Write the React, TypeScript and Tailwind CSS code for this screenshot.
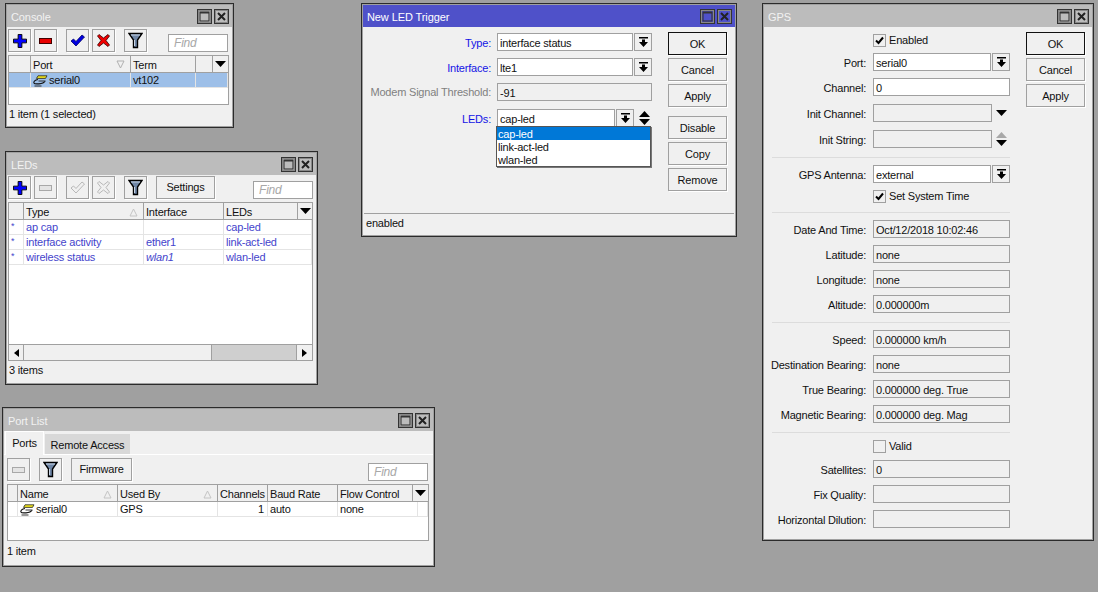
import type { ReactNode } from "react";

function RestoreIcon() {
  return (
    <svg width="13" height="13" viewBox="0 0 13 13">
      <rect x="2" y="2" width="9" height="9" fill="none" stroke="#333" strokeWidth="1.100" />
      <rect x="2" y="2" width="9" height="1.500" fill="#333" />
    </svg>
  );
}

function CloseIcon() {
  return (
    <svg width="13" height="13" viewBox="0 0 13 13">
      <path d="M3 3l7 7M10 3l-7 7" stroke="#222" strokeWidth="2" />
    </svg>
  );
}

function PlusIcon() {
  return (
    <svg width="14" height="14" viewBox="0 0 15 15">
      <path d="M5.500 .5h4v5h5v4h-5v5h-4v-5h-5v-4h5z" fill="#0000ff" stroke="#000" />
    </svg>
  );
}

function MinusIcon({ off }: { off?: boolean }) {
  return (
    <svg width="15" height="8" viewBox="0 0 15 8">
      <rect x="1.500" y="1.500" width="12" height="5" fill={off ? "#e4e4e4" : "#e80000"} stroke={off ? "#a8a8a8" : "#400000"} />
    </svg>
  );
}

function CheckIcon({ off }: { off?: boolean }) {
  return (
    <svg width="15" height="13" viewBox="0 0 15 13">
      <path
        d="M1 7l2.500-2 2.500 2.500L12 1l2.500 2L6 12z"
        fill={off ? "#f0f0f0" : "#0000e0"}
        stroke={off ? "#a8a8a8" : "#00006a"}
        strokeWidth=".8"
      />
    </svg>
  );
}

function CrossIcon({ off }: { off?: boolean }) {
  return (
    <svg width="15" height="15" viewBox="0 0 15 15">
      <path
        d="M3 1.500l4.500 3.500L12 1.500l1.500 1.500-3.500 4.500 3.500 4.500-1.500 1.500-4.500-3.500L3 13.500 1.500 12 5 7.500 1.500 3z"
        fill={off ? "#f0f0f0" : "#f00000"}
        stroke={off ? "#a8a8a8" : "#300000"}
        strokeWidth=".8"
      />
    </svg>
  );
}

function FilterIcon() {
  return (
    <svg width="15" height="17" viewBox="0 0 15 17">
      <path d="M1 1.500h13L9.500 8v7.500h-4V8z" fill="#6f86a6" stroke="#000" strokeWidth="1.400" />
      <path d="M6.500 8v6" stroke="#c8d4e4" />
      <path d="M3 3h9" stroke="#c8d4e4" />
    </svg>
  );
}

function SerialIcon() {
  return (
    <svg width="15" height="12" viewBox="0 0 15 12" className="shrink-0">
      <path d="M5 .8h9l-1.500 2.600H3.500z" fill="#f5e81e" stroke="#222" strokeWidth=".8" />
      <path d="M5 4.500C2 5 .5 6.500 1 8c.4 1 3 1 5 .8 2.500-.2 5-.8 6-2.600" fill="none" stroke="#111" strokeWidth="1.200" />
      <path d="M5.500 6h7M1.500 11h7" fill="none" stroke="#333" />
    </svg>
  );
}

function SortMark() {
  return (
    <svg width="9" height="9" viewBox="0 0 9 9" className="absolute right-[5px] top-[5px]">
      <path d="M1 8h7M1 8l3.500-7L8 8" fill="none" stroke="#c4c4c4" />
    </svg>
  );
}

function SortMarkDown() {
  return (
    <svg width="9" height="9" viewBox="0 0 9 9" className="absolute right-[5px] top-[4px]">
      <path d="M1 1h7L4.500 8z" fill="none" stroke="#b0b0b0" />
    </svg>
  );
}

function DownTriangle() {
  return (
    <svg width="11" height="6" viewBox="0 0 11 6">
      <path d="M0 0h11L5.500 6z" fill="#000" />
    </svg>
  );
}

function DropArrow() {
  return (
    <svg width="9" height="10" viewBox="0 0 9 10">
      <rect x="0" y="0" width="9" height="1.500" fill="#000" />
      <path d="M3 2.500h3V5h3L4.500 10 0 5h3z" fill="#000" />
    </svg>
  );
}

function UpDown({ upOff }: { upOff?: boolean }) {
  return (
    <svg width="11" height="14" viewBox="0 0 11 14">
      <path d="M5.500 0L11 6H0z" fill={upOff ? "#a8a8a8" : "#000"} />
      <path d="M0 8h11l-5.500 6z" fill="#000" />
    </svg>
  );
}

function Win({
  pos,
  title,
  active,
  children,
}: {
  pos: string;
  title: string;
  active?: boolean;
  children: ReactNode;
}) {
  return (
    <div className={`absolute flex flex-col border border-[#2b2b2b] bg-[#f0f0f0] shadow-[inset_0_0_0_1px_#a0a0a0] p-px ${pos}`}>
      <div className={`flex h-[22px] shrink-0 items-center justify-between pl-[4px] pr-[3px] tracking-[-0.1px] ${active ? "bg-[#4f51c9] text-white" : "bg-[#bcbcbc] text-[#f2f2f2]"}`}>
        <span className="pt-[2px]">{title}</span>
        <div className="flex gap-[2px]">
          <div className="flex h-[15px] w-[15px] items-center justify-center border border-[#333] shadow-[inset_0_0_0_1px_#888]">
            <RestoreIcon />
          </div>
          <div className="flex h-[15px] w-[15px] items-center justify-center border border-[#333] shadow-[inset_0_0_0_1px_#888]">
            <CloseIcon />
          </div>
        </div>
      </div>
      {children}
    </div>
  );
}

function Tool({ children, extra }: { children: ReactNode; extra?: string }) {
  return (
    <div className={`flex h-[23px] w-[23px] shrink-0 items-center justify-center border border-[#a0a0a0] bg-[#f0f0f0] shadow-[1px_1px_0_#fff] ${extra ?? ""}`}>
      {children}
    </div>
  );
}

function TextTool({ label, width }: { label: string; width: string }) {
  return (
    <div className={`flex h-[23px] shrink-0 items-center justify-center border border-[#a0a0a0] bg-[#f0f0f0] pb-[1px] shadow-[1px_1px_0_#fff] ${width}`}>
      {label}
    </div>
  );
}

function Find({ extra }: { extra: string }) {
  return (
    <div className={`flex h-[18px] w-[60px] items-center border border-[#a0a0a0] bg-white pl-[5px] text-[12px] italic text-[#a8a8a8] ${extra}`}>
      Find
    </div>
  );
}

function HeadCell({ w, children }: { w: string; children?: ReactNode }) {
  return (
    <div className={`relative flex h-[17px] shrink-0 items-center border-r border-b border-[#a0a0a0] pl-[2px] pt-[2px] whitespace-nowrap ${w}`}>
      {children}
    </div>
  );
}

function Cell({ w, extra, children }: { w: string; extra?: string; children?: ReactNode }) {
  return (
    <div className={`flex h-[15px] shrink-0 items-center border-r border-b border-[#e4e4e4] pl-[2px] pt-[1px] whitespace-nowrap ${w} ${extra ?? ""}`}>
      {children}
    </div>
  );
}

function DropBtn() {
  return (
    <div className="flex h-[18px] w-[18px] shrink-0 items-center justify-center border border-[#a0a0a0] bg-[#f0f0f0]">
      <DropArrow />
    </div>
  );
}

function Input({ w, off, children }: { w: string; off?: boolean; children?: ReactNode }) {
  return (
    <div className={`flex h-[18px] shrink-0 items-center border border-[#a0a0a0] pl-[2px] pt-[2px] whitespace-nowrap ${off ? "bg-[#f0f0f0]" : "bg-white"} ${w}`}>
      {children}
    </div>
  );
}

function DlgBtn({ label, extra, main }: { label: string; extra?: string; main?: boolean }) {
  return (
    <div className={`flex h-[23px] w-[59px] items-center justify-center border pt-[2px] ${main ? "border-[#111]" : "border-[#a0a0a0]"} shadow-[1px_1px_0_#fff] ${extra ?? ""}`}>
      {label}
    </div>
  );
}

function Row({ label, m, children }: { label: string; m: string; children: ReactNode }) {
  return (
    <div className={`flex h-[18px] items-center ${m}`}>
      <div className="w-[102px] shrink-0 pt-[2px] text-right whitespace-nowrap">{label}</div>
      <div className="ml-[7px] flex items-center">{children}</div>
    </div>
  );
}

function Check({ label, on, m }: { label: string; on?: boolean; m: string }) {
  return (
    <div className={`ml-[109px] flex h-[18px] items-center gap-[3px] ${m}`}>
      <div className="flex h-[13px] w-[13px] items-center justify-center border border-[#a0a0a0] bg-[#f0f0f0]">
        {on && (
          <svg width="9" height="9" viewBox="0 0 9 9">
            <path d="M1 4.500l2.500 2.500L8 1.500" fill="none" stroke="#000" strokeWidth="2" />
          </svg>
        )}
      </div>
      <span className="pt-[1px]">{label}</span>
    </div>
  );
}

function Sep({ m }: { m: string }) {
  return <div className={`ml-[8px] h-px w-[238px] bg-[#dcdcdc] ${m}`} />;
}

function Console() {
  return (
    <Win pos="left-[5px] top-[3px] w-[229px] h-[125px]" title="Console">
      <div className="flex h-[28px] shrink-0 pl-[1px] pt-[2px]">
        <Tool><PlusIcon /></Tool>
        <Tool extra="ml-[3px]"><MinusIcon /></Tool>
        <Tool extra="ml-[9px]"><CheckIcon /></Tool>
        <Tool extra="ml-[3px]"><CrossIcon /></Tool>
        <Tool extra="ml-[9px]"><FilterIcon /></Tool>
        <Find extra="ml-[21px] mt-[5px]" />
      </div>
      <div className="mx-px h-[50px] w-[221px] shrink-0 border border-[#a0a0a0] bg-white">
        <div className="flex bg-[#f0f0f0]">
          <HeadCell w="w-[22px]" />
          <HeadCell w="w-[100px]">Port<SortMarkDown /></HeadCell>
          <HeadCell w="w-[65px]">Term</HeadCell>
          <HeadCell w="w-[17px]" />
          <div className="flex h-[17px] flex-1 items-center justify-center border-b border-[#a0a0a0]"><DownTriangle /></div>
        </div>
        <div className="flex bg-[#9dbfe8]">
          <Cell w="w-[22px]" />
          <Cell w="w-[100px]" extra="gap-[1px]"><SerialIcon />serial0</Cell>
          <Cell w="w-[65px]">vt102</Cell>
          <Cell w="flex-1" />
        </div>
      </div>
      <div className="flex h-[19px] items-center pl-[2px]">1 item (1 selected)</div>
    </Win>
  );
}

function Leds() {
  const rows = [
    ["ap cap", "", "cap-led"],
    ["interface activity", "ether1", "link-act-led"],
    ["wireless status", "wlan1", "wlan-led"],
  ];
  return (
    <Win pos="left-[5px] top-[151px] w-[313px] h-[234px]" title="LEDs">
      <div className="flex h-[27px] shrink-0 pl-[1px] pt-[1px]">
        <Tool><PlusIcon /></Tool>
        <Tool extra="ml-[3px]"><MinusIcon off /></Tool>
        <Tool extra="ml-[9px]"><CheckIcon off /></Tool>
        <Tool extra="ml-[3px]"><CrossIcon off /></Tool>
        <Tool extra="ml-[9px]"><FilterIcon /></Tool>
        <TextTool label="Settings" width="ml-[9px] w-[59px]" />
        <Find extra="ml-[38px] mt-[5px]" />
      </div>
      <div className="mx-px flex h-[159px] w-[305px] shrink-0 flex-col border border-[#a0a0a0] bg-white">
        <div className="flex bg-[#f0f0f0]">
          <HeadCell w="w-[15px]" />
          <HeadCell w="w-[120px]">Type<SortMark /></HeadCell>
          <HeadCell w="w-[80px]">Interface</HeadCell>
          <HeadCell w="w-[74px]">LEDs</HeadCell>
          <div className="flex h-[17px] flex-1 items-center justify-center border-b border-[#a0a0a0]"><DownTriangle /></div>
        </div>
        {rows.map((r) => (
          <div key={r[0]} className="flex text-[#4444cc]">
            <Cell w="w-[15px]" extra="items-start pl-[2px] pt-[2px] text-[9px]">*</Cell>
            <Cell w="w-[120px]">{r[0]}</Cell>
            <Cell w="w-[80px]" extra={r[1] === "wlan1" ? "italic" : ""}>{r[1]}</Cell>
            <Cell w="flex-1">{r[2]}</Cell>
          </div>
        ))}
        <div className="mt-auto flex h-[16px] border-t border-[#a0a0a0] bg-[#f0f0f0]">
          <div className="flex w-[15px] items-center justify-center border-r border-[#a0a0a0]">
            <svg width="5" height="8" viewBox="0 0 5 8"><path d="M5 0v8L0 4z" fill="#000" /></svg>
          </div>
          <div className="w-[188px] border-r border-[#a0a0a0]" />
          <div className="flex-1 bg-[#cfcfcf]" />
          <div className="flex w-[16px] items-center justify-center border-l border-[#a0a0a0]">
            <svg width="5" height="8" viewBox="0 0 5 8"><path d="M0 0v8l5-4z" fill="#000" /></svg>
          </div>
        </div>
      </div>
      <div className="flex h-[19px] items-center pl-[2px]">3 items</div>
    </Win>
  );
}

function PortList() {
  return (
    <Win pos="left-[2px] top-[407px] w-[433px] h-[160px]" title="Port List">
      <div className="flex h-[24px] shrink-0 items-end border-b border-white pl-[1px]">
        <div className="-mb-px flex h-[24px] w-[39px] items-center justify-center border-x border-t border-white bg-[#f0f0f0]">Ports</div>
        <div className="ml-px flex h-[20px] w-[85px] items-center justify-center bg-[#d8d8d8] pt-[2px]">Remote Access</div>
      </div>
      <div className="flex h-[29px] shrink-0 pl-[3px] pt-[3px]">
        <Tool><MinusIcon off /></Tool>
        <Tool extra="ml-[9px]"><FilterIcon /></Tool>
        <TextTool label="Firmware" width="ml-[9px] w-[61px]" />
        <Find extra="ml-[236px] mt-[5px]" />
      </div>
      <div className="mx-[3px] h-[57px] w-[422px] shrink-0 border border-[#a0a0a0] bg-white">
        <div className="flex bg-[#f0f0f0]">
          <HeadCell w="w-[10px]" />
          <HeadCell w="w-[100px]">Name<SortMark /></HeadCell>
          <HeadCell w="w-[100px]">Used By<SortMark /></HeadCell>
          <HeadCell w="w-[50px]">Channels</HeadCell>
          <HeadCell w="w-[70px]">Baud Rate</HeadCell>
          <HeadCell w="w-[75px]">Flow Control</HeadCell>
          <div className="flex h-[17px] flex-1 items-center justify-center border-b border-[#a0a0a0]"><DownTriangle /></div>
        </div>
        <div className="flex">
          <Cell w="w-[10px]" />
          <Cell w="w-[100px]" extra="gap-[1px]"><SerialIcon />serial0</Cell>
          <Cell w="w-[100px]">GPS</Cell>
          <Cell w="w-[50px]" extra="justify-end pr-[3px]">1</Cell>
          <Cell w="w-[70px]">auto</Cell>
          <Cell w="w-[80px]">none</Cell>
          <Cell w="flex-1" />
        </div>
      </div>
      <div className="flex h-[21px] items-center pl-[3px]">1 item</div>
    </Win>
  );
}

function LedTrigger() {
  return (
    <Win pos="left-[361px] top-[3px] w-[376px] h-[234px]" title="New LED Trigger" active>
      <div className="relative flex flex-1">
        <div className="flex w-[305px] shrink-0 flex-col pt-[6px]">
          <div className="flex h-[18px] items-center">
            <div className="w-[128px] pt-[2px] text-right text-[#1414e6]">Type:</div>
            <div className="ml-[6px]"><Input w="w-[136px]">interface status</Input></div>
            <div className="ml-px"><DropBtn /></div>
          </div>
          <div className="mt-[7px] flex h-[18px] items-center">
            <div className="w-[128px] pt-[2px] text-right text-[#1414e6]">Interface:</div>
            <div className="ml-[6px]"><Input w="w-[136px]">lte1</Input></div>
            <div className="ml-px"><DropBtn /></div>
          </div>
          <div className="mt-[7px] flex h-[18px] items-center">
            <div className="w-[128px] pt-[1px] text-right whitespace-nowrap text-[#808080]">Modem Signal Threshold:</div>
            <div className="ml-[6px]"><Input w="w-[155px]" off>-91</Input></div>
          </div>
          <div className="mt-[8px] flex h-[18px] items-center">
            <div className="w-[128px] pt-[2px] text-right text-[#1414e6]">LEDs:</div>
            <div className="ml-[6px]"><Input w="w-[118px]">cap-led</Input></div>
            <div className="ml-px"><DropBtn /></div>
            <div className="ml-[3px] flex w-[15px] justify-center"><UpDown /></div>
          </div>
        </div>
        <div className="flex flex-col pt-[5px]">
          <DlgBtn label="OK" main />
          <DlgBtn label="Cancel" extra="mt-[3px]" />
          <DlgBtn label="Apply" extra="mt-[3px]" />
          <DlgBtn label="Disable" extra="mt-[9px]" />
          <DlgBtn label="Copy" extra="mt-[3px]" />
          <DlgBtn label="Remove" extra="mt-[3px]" />
        </div>
        {/* open list of the LEDs field */}
        <div className="absolute left-[133px] top-[99px] z-10 h-[41px] w-[155px] border border-[#555] bg-white shadow-[1px_1px_0_#777]">
          <div className="flex h-[13px] items-center bg-[#0078d7] pl-[1px] pt-[2px] text-white">cap-led</div>
          <div className="flex h-[13px] items-center pl-[1px] pt-[2px]">link-act-led</div>
          <div className="flex h-[13px] items-center pl-[1px] pt-[2px]">wlan-led</div>
        </div>
      </div>
      <div className="mx-[1px] mb-[3px] flex h-[19px] shrink-0 items-center border-t border-[#a0a0a0] pl-[2px]">enabled</div>
    </Win>
  );
}

function Gps() {
  return (
    <Win pos="left-[762px] top-[3px] w-[332px] h-[538px]" title="GPS">
      <div className="flex flex-1">
        <div className="flex w-[262px] shrink-0 flex-col pt-[4px]">
          <Check label="Enabled" on m="" />
          <Row label="Port:" m="mt-[4px]"><Input w="w-[118px]">serial0</Input><div className="ml-px"><DropBtn /></div></Row>
          <Row label="Channel:" m="mt-[7px]"><Input w="w-[137px]">0</Input></Row>
          <Row label="Init Channel:" m="mt-[8px]"><Input w="w-[119px]" off /><div className="ml-[4px]"><DownTriangle /></div></Row>
          <Row label="Init String:" m="mt-[8px]"><Input w="w-[119px]" off /><div className="ml-[4px]"><UpDown upOff /></div></Row>
          <Sep m="mt-[9px]" />
          <Row label="GPS Antenna:" m="mt-[7px]"><Input w="w-[118px]">external</Input><div className="ml-px"><DropBtn /></div></Row>
          <Check label="Set System Time" on m="mt-[4px]" />
          <Sep m="mt-[7px]" />
          <Row label="Date And Time:" m="mt-[7px]"><Input w="w-[137px]" off>Oct/12/2018 10:02:46</Input></Row>
          <Row label="Latitude:" m="mt-[7px]"><Input w="w-[137px]" off>none</Input></Row>
          <Row label="Longitude:" m="mt-[7px]"><Input w="w-[137px]" off>none</Input></Row>
          <Row label="Altitude:" m="mt-[7px]"><Input w="w-[137px]" off>0.000000m</Input></Row>
          <Sep m="mt-[9px]" />
          <Row label="Speed:" m="mt-[7px]"><Input w="w-[137px]" off>0.000000 km/h</Input></Row>
          <Row label="Destination Bearing:" m="mt-[7px]"><Input w="w-[137px]" off>none</Input></Row>
          <Row label="True Bearing:" m="mt-[7px]"><Input w="w-[137px]" off>0.000000 deg. True</Input></Row>
          <Row label="Magnetic Bearing:" m="mt-[7px]"><Input w="w-[137px]" off>0.000000 deg. Mag</Input></Row>
          <Sep m="mt-[9px]" />
          <Check label="Valid" m="mt-[4px]" />
          <Row label="Satellites:" m="mt-[5px]"><Input w="w-[137px]" off>0</Input></Row>
          <Row label="Fix Quality:" m="mt-[7px]"><Input w="w-[137px]" off /></Row>
          <Row label="Horizontal Dilution:" m="mt-[7px]"><Input w="w-[137px]" off /></Row>
        </div>
        <div className="flex flex-col pt-[5px]">
          <DlgBtn label="OK" main />
          <DlgBtn label="Cancel" extra="mt-[3px]" />
          <DlgBtn label="Apply" extra="mt-[3px]" />
        </div>
      </div>
    </Win>
  );
}

export default function App() {
  return (
    <div className="relative h-[592px] w-[1098px] overflow-hidden bg-[#a0a0a0] font-['Liberation_Sans',sans-serif] text-[11px] leading-none tracking-[-0.2px] text-[#111]">
      <Console />
      <Leds />
      <PortList />
      <LedTrigger />
      <Gps />
    </div>
  );
}
